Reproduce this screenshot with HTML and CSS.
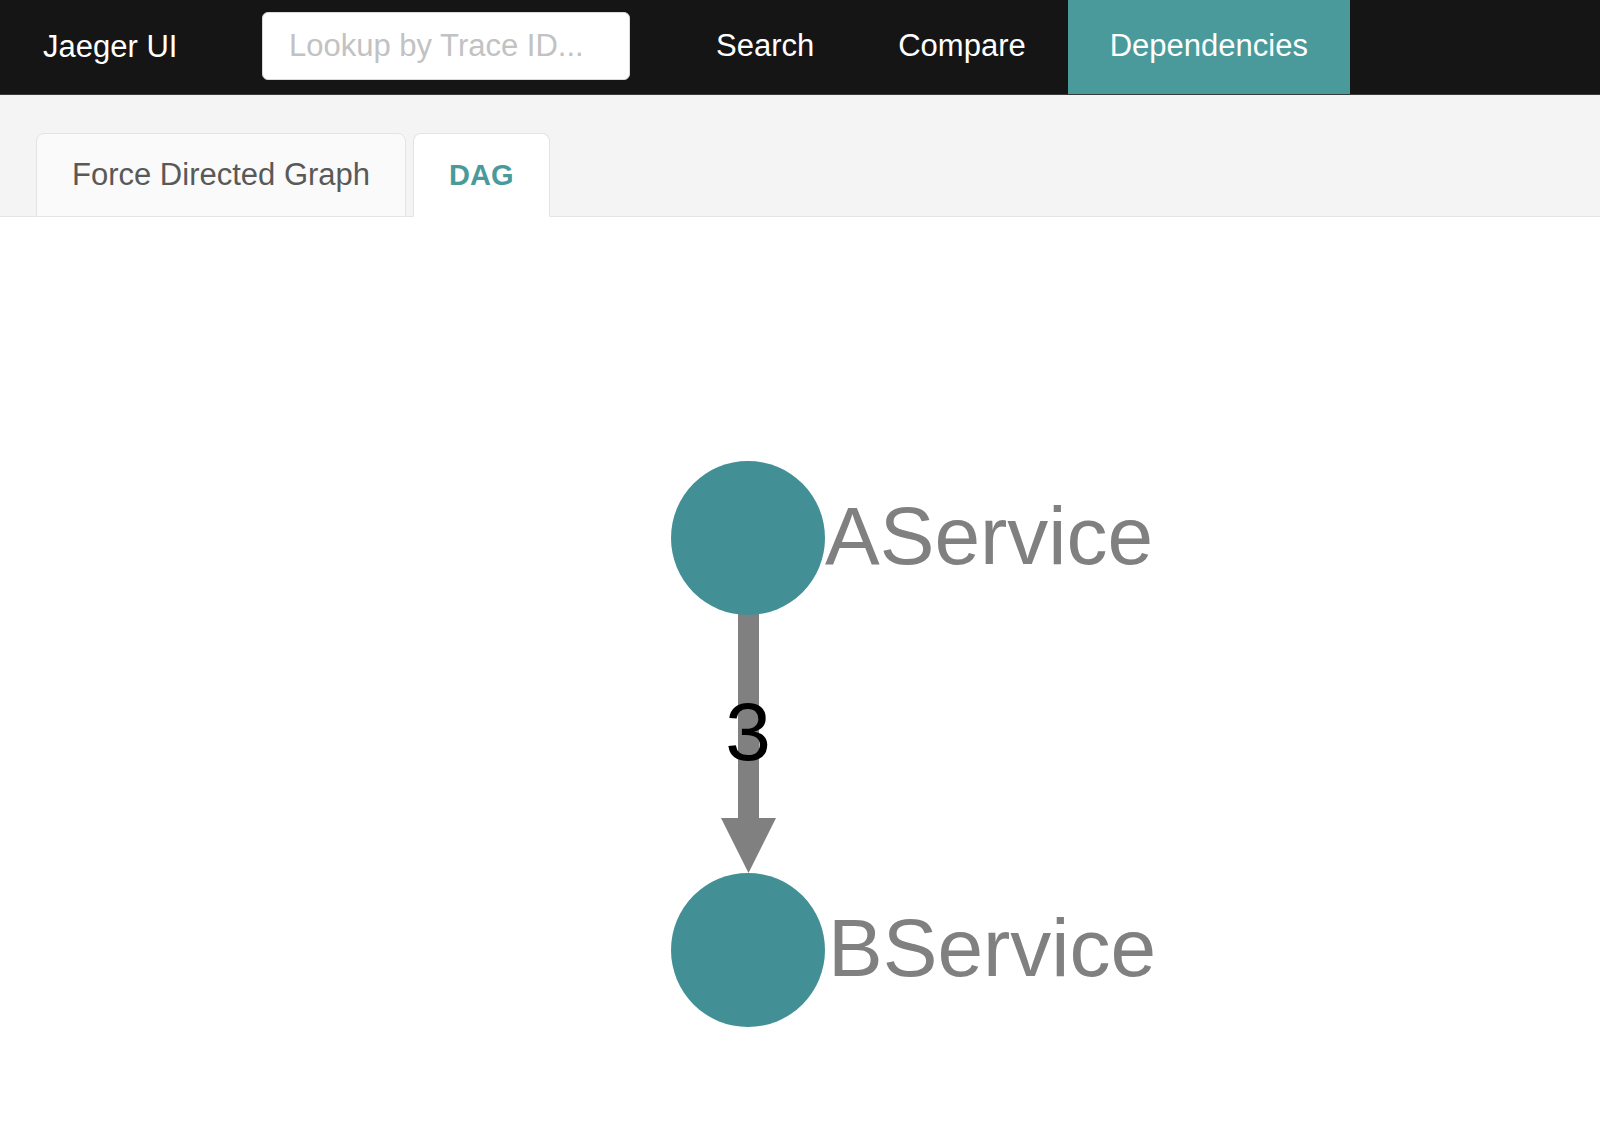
FILE: index.html
```html
<!DOCTYPE html>
<html lang="en">
<head>
    <meta charset="UTF-8">
    <title>Jaeger UI - Dependencies</title>
    <link rel="stylesheet" href="styles.css">
</head>
<body>
    <header class="topnav">
        <div class="brand">Jaeger UI</div>
        <input class="lookup" type="text" placeholder="Lookup by Trace ID...">
        <nav>
            <ul>
                <li><a href="#">Search</a></li>
                <li><a href="#">Compare</a></li>
                <li class="active"><a href="#">Dependencies</a></li>
            </ul>
        </nav>
    </header>

    <!-- Tabs -->
    <div class="tab-bar">
        <div class="tab">Force Directed Graph</div>
        <div class="tab active">DAG</div>
    </div>

    <!-- DAG -->
    <div class="graph">
        <svg width="1600" height="924" viewBox="0 0 1600 924">
            <line class="edge" x1="748.5" y1="395" x2="748.5" y2="603" />
            <polygon class="arrow" points="721,601 776,601 748.5,656" />
            <text class="edge-label" x="748" y="543">3</text>

            <circle class="node" cx="748" cy="321" r="77" />
            <text class="node-label" x="825" y="347">AService</text>

            <circle class="node" cx="748" cy="733" r="77" />
            <text class="node-label" x="828" y="759">BService</text>
        </svg>
    </div>
</body>
</html>
```

FILE: styles.css
```css
body {
    margin: 0;
    font-family: "Liberation Sans", Arial, sans-serif;
    background-color: #fff;
}

.topnav {
    display: flex;
    align-items: center;
    height: 94px;
    background-color: #151515;
    border-bottom: 1px solid #3a3a3a;
}

.brand {
    color: #fff;
    font-size: 31px;
    margin-left: 43px;
    width: 219px;
}

.lookup {
    box-sizing: border-box;
    width: 368px;
    height: 68px;
    margin-top: -3px;
    padding: 0 26px;
    border: 1px solid #d9d9d9;
    border-radius: 6px;
    font-family: inherit;
    font-size: 31px;
    color: #333;
}

.lookup::placeholder {
    color: #c2c2c2;
}

nav ul {
    list-style: none;
    display: flex;
    margin: 0 0 0 44px;
    padding: 0;
}

nav ul li a {
    display: block;
    height: 94px;
    line-height: 91px;
    padding: 0 42px;
    color: #fff;
    font-size: 31px;
    text-decoration: none;
}

nav ul li.active a {
    background-color: #4a9a9b;
}

.tab-bar {
    display: flex;
    align-items: flex-end;
    gap: 7px;
    height: 121px;
    padding-left: 36px;
    background-color: #f4f4f4;
    border-bottom: 1px solid #e4e4e4;
}

.tab {
    box-sizing: border-box;
    height: 84px;
    margin-bottom: -1px;
    padding: 0 35px;
    line-height: 82px;
    font-size: 31px;
    color: #595959;
    background-color: #fafafa;
    border: 1px solid #e4e4e4;
    border-radius: 8px 8px 0 0;
}

.tab.active {
    color: #4a9a9b;
    font-weight: bold;
    font-size: 29px;
    background-color: #fff;
    border-bottom-color: #fff;
}

.graph svg {
    display: block;
}

.edge {
    stroke: #808080;
    stroke-width: 21;
}

.arrow {
    fill: #808080;
}

.node {
    fill: #428f96;
}

.edge-label {
    font-size: 82px;
    fill: #000;
    text-anchor: middle;
}

.node-label {
    font-size: 82px;
    fill: #808080;
}
```
